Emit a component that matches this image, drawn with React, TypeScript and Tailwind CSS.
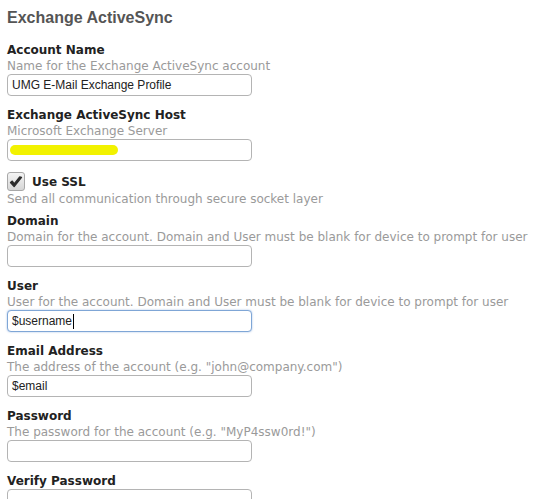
import { ReactNode } from 'react';

type FieldProps = {
  label: string;
  hint?: string;
  focused?: boolean;
  children?: ReactNode;
};

function Field({ label, hint, focused, children }: FieldProps) {
  return (
    <div className="mb-[11px]">
      <div className="text-[12px] font-bold leading-4 text-[#222]">{label}</div>
      {hint ? <div className="text-[12px] leading-4 text-[#9a9a9a]">{hint}</div> : null}
      <div
        className={`flex h-[22px] w-[245px] items-center rounded-[4px] border bg-white px-[4px] font-['Liberation_Sans',Arial,sans-serif] text-[12px] text-[#222] ${
          focused ? 'border-[#7fa6d6] shadow-[0_0_2px_rgba(90,140,210,0.6)]' : 'border-[#b4b4b4]'
        }`}
      >
        {children}
      </div>
    </div>
  );
}

export default function App() {
  return (
    <main className="min-h-screen bg-white px-[7px] pt-[8px] font-['DejaVu_Sans',Verdana,sans-serif]">
      <h1 className="mb-[14px] font-['Liberation_Sans',Arial,sans-serif] text-[16px] font-bold leading-5 text-[#555]">
        Exchange ActiveSync
      </h1>

      <Field label="Account Name" hint="Name for the Exchange ActiveSync account">
        UMG E-Mail Exchange Profile
      </Field>

      <Field label="Exchange ActiveSync Host" hint="Microsoft Exchange Server">
        <span className="-ml-[2px] h-[10px] w-[108px] rounded-full bg-[#f2f200]" />
      </Field>

      <div className="mb-[6px]">
        <div className="flex items-center gap-[7px]">
          <span className="flex h-[19px] w-[18px] items-center justify-center rounded-[3px] border border-[#a8a8a8] bg-gradient-to-b from-[#f4f4f4] to-[#d6d6d6]">
            <svg width="14" height="12" viewBox="0 0 15 13">
              <path d="M1.5 7 L5.5 11.5 L13.5 1.5 L11.5 1 L5.5 8.5 L3.5 5.5 Z" fill="#2b2b2b" stroke="#2b2b2b" strokeWidth="1.4" strokeLinejoin="round" />
            </svg>
          </span>
          <span className="text-[12px] font-bold leading-4 text-[#222]">Use SSL</span>
        </div>
        <div className="text-[12px] leading-4 text-[#9a9a9a]">Send all communication through secure socket layer</div>
      </div>

      <Field label="Domain" hint="Domain for the account. Domain and User must be blank for device to prompt for user" />

      <Field label="User" hint="User for the account. Domain and User must be blank for device to prompt for user" focused>
        $username
        <span className="ml-px h-[15px] w-px bg-black" />
      </Field>

      <Field label="Email Address" hint='The address of the account (e.g. "john@company.com")'>
        $email
      </Field>

      <Field label="Password" hint='The password for the account (e.g. "MyP4ssw0rd!")' />

      <Field label="Verify Password" />
    </main>
  );
}
